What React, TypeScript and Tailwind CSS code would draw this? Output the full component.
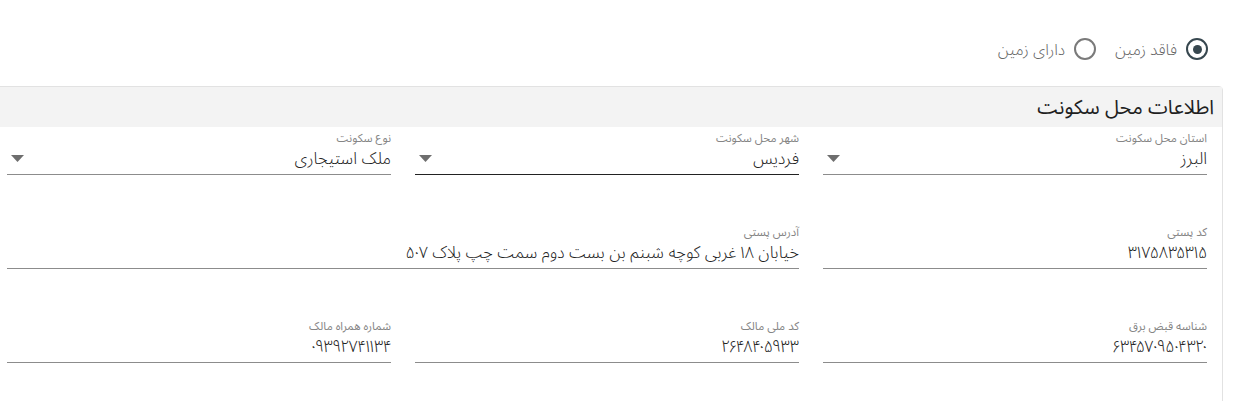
const rows = [
  [
    { label: 'استان محل سکونت', value: 'البرز', select: true },
    { label: 'شهر محل سکونت', value: 'فردیس', select: true, active: true },
    { label: 'نوع سکونت', value: 'ملک استیجاری', select: true },
  ],
  [
    { label: 'کد پستی', value: '۳۱۷۵۸۳۵۳۱۵' },
    { label: 'آدرس پستی', value: 'خیابان ۱۸ غربی کوچه شبنم بن بست دوم سمت چپ پلاک ۵۰۷', wide: true },
  ],
  [
    { label: 'شناسه قبض برق', value: '۶۳۴۵۷۰۹۵۰۴۳۲۰' },
    { label: 'کد ملی مالک', value: '۲۶۴۸۴۰۵۹۳۳' },
    { label: 'شماره همراه مالک', value: '۰۹۳۹۲۷۴۱۱۳۴' },
  ],
];

type Field = { label: string; value: string; select?: boolean; active?: boolean; wide?: boolean };

function Radio({ checked, label }: { checked?: boolean; label: string }) {
  return (
    <label className="flex items-center gap-[9px]">
      <span
        className={`flex h-[22px] w-[22px] items-center justify-center rounded-full border-2 ${
          checked ? 'border-[#37474f]' : 'border-[#7a7a7a]'
        }`}
      >
        {checked && <span className="h-[9px] w-[9px] rounded-full bg-[#37474f]" />}
      </span>
      <span className="text-[16px] font-light leading-6 text-[#666]">{label}</span>
    </label>
  );
}

function FieldBox({ f }: { f: Field }) {
  return (
    <div className={`${f.wide ? 'col-span-2' : ''}`}>
      <div className="text-[11.5px] leading-4 text-[#858585]">{f.label}</div>
      <div
        className={`flex items-center justify-between border-b pb-1 ${
          f.active ? 'border-[#222]' : 'border-[#8c8c8c]'
        }`}
      >
        <span className="text-[16.7px] font-light leading-6 text-[#222]">{f.value}</span>
        {f.select && (
          <svg width="13" height="7" viewBox="0 0 13 7" className="ml-1 shrink-0">
            <path d="M0 0h13L6.5 7z" fill="#6e6e6e" />
          </svg>
        )}
      </div>
    </div>
  );
}

export default function App() {
  return (
    <div
      dir="rtl"
      className="h-[401px] overflow-hidden bg-white"
      style={{ fontFamily: '"Noto Sans Arabic UI", "Noto Sans Arabic", "Noto Naskh Arabic", "DejaVu Sans", "Noto Sans", sans-serif' }}
    >
      <div className="flex gap-[19px] pr-[40px] pt-[37px]">
        <Radio checked label="فاقد زمین" />
        <Radio label="دارای زمین" />
      </div>

      <div className="mr-[25px] mt-[25px] w-[1232px] rounded-t-[4px] border border-[#e2e2e2]">
        <div className="flex h-10 items-center bg-[#f3f3f3] pr-2">
          <h2 className="text-[20px] font-normal text-[#1f1f1f]">اطلاعات محل سکونت</h2>
        </div>
        <div className="grid grid-cols-[384px_384px_384px] gap-x-6 gap-y-[49px] pb-10 pl-4 pr-[15px] pt-[3px]">
          {rows.flat().map((f, i) => (
            <FieldBox key={i} f={f} />
          ))}
        </div>
      </div>
    </div>
  );
}
